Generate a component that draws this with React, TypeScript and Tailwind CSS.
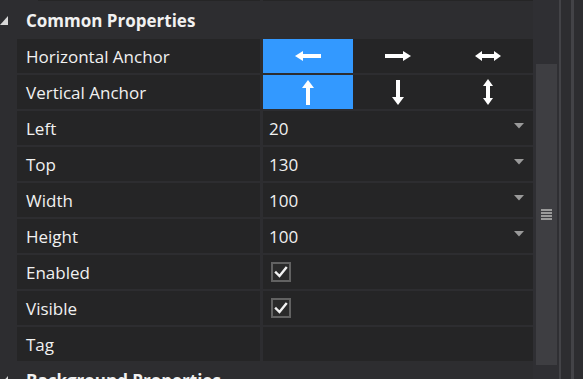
import React from "react";

const FONT = { fontFamily: '"Open Sans", "Noto Sans", sans-serif' };

function Tri() {
  return (
    <svg width="8" height="9" viewBox="0 0 8 9" className="shrink-0">
      <polygon points="8,0 8,9 0,9" fill="#d8d8d8" />
    </svg>
  );
}

function Header({ title }: { title: string }) {
  return (
    <div className="flex h-[34px] shrink-0 items-center">
      <div className="w-[26px] flex items-center">
        <Tri />
      </div>
      <span className="text-[17px] font-bold text-[#f1f1f1] leading-none pt-[1px]">{title}</span>
    </div>
  );
}

function Row({ label, children }: { label: string; children?: React.ReactNode }) {
  return (
    <div className="flex h-[34px] shrink-0 pl-[17px]">
      <div className="w-[243px] bg-[#252526] flex items-center pl-[9px] pt-[2px] text-[17px] text-[#f1f1f1]">
        {label}
      </div>
      <div className="w-[3px]" />
      <div className="w-[270px] bg-[#252526] flex items-center">{children}</div>
    </div>
  );
}

function Dropdown({ value }: { value: string }) {
  return (
    <div className="flex flex-1 items-center justify-between pl-[6px] pr-[9px] text-[17px] text-[#f1f1f1]">
      <span className="pt-[2px]">{value}</span>
      <svg width="10" height="6" viewBox="0 0 10 6" className="mb-[4px]">
        <polygon points="0,0 10,0 5,5.5" fill="#9a9a9a" />
      </svg>
    </div>
  );
}

function Check() {
  return (
    <div className="ml-[8px] w-[20px] h-[20px] border-2 border-[#626262] bg-[#2a2a2a] flex items-center justify-center">
      <svg width="14" height="12" viewBox="0 0 14 12">
        <path d="M2 6.5 L5.5 10 L12 2" stroke="#f2f2f2" strokeWidth="2.4" fill="none" strokeLinecap="square" />
      </svg>
    </div>
  );
}

function Cell({ active, children }: { active?: boolean; children: React.ReactNode }) {
  return (
    <div className={`w-[90px] h-full flex items-center justify-center ${active ? "bg-[#3399ff]" : ""}`}>
      {children}
    </div>
  );
}

const ArrowLeft = () => (
  <svg width="26" height="10" viewBox="0 0 26 10">
    <polygon points="0,5 8,0 8,10" fill="#fff" />
    <rect x="8" y="3" width="18" height="4" fill="#fff" />
  </svg>
);
const ArrowRight = () => (
  <svg width="26" height="10" viewBox="0 0 26 10">
    <polygon points="26,5 18,0 18,10" fill="#fff" />
    <rect x="0" y="3" width="18" height="4" fill="#fff" />
  </svg>
);
const ArrowH = () => (
  <svg width="26" height="10" viewBox="0 0 26 10">
    <polygon points="0,5 7,0 7,10" fill="#fff" />
    <polygon points="26,5 19,0 19,10" fill="#fff" />
    <rect x="7" y="3" width="12" height="4" fill="#fff" />
  </svg>
);
const ArrowUp = () => (
  <svg width="12" height="25" viewBox="0 0 12 25">
    <polygon points="6,0 0,8 12,8" fill="#fff" />
    <rect x="4" y="8" width="4" height="17" fill="#fff" />
  </svg>
);
const ArrowDown = () => (
  <svg width="12" height="25" viewBox="0 0 12 25">
    <polygon points="6,25 0,17 12,17" fill="#fff" />
    <rect x="4" y="0" width="4" height="17" fill="#fff" />
  </svg>
);
const ArrowV = () => (
  <svg width="10" height="26" viewBox="0 0 10 26">
    <polygon points="5,0 0,7 10,7" fill="#fff" />
    <polygon points="5,26 0,19 10,19" fill="#fff" />
    <rect x="3" y="7" width="4" height="12" fill="#fff" />
  </svg>
);

export default function App() {
  return (
    <div className="w-[583px] h-[379px] overflow-hidden bg-[#2d2d30] flex" style={FONT}>
      <div className="w-[533px] flex flex-col gap-[2px]">
        <div className="flex h-[1px] shrink-0 pl-[38px]">
          <div className="w-[222px] bg-[#252526]" />
          <div className="w-[3px]" />
          <div className="w-[270px] bg-[#252526]" />
        </div>
        <Header title="Common Properties" />
        <Row label="Horizontal Anchor">
          <Cell active><ArrowLeft /></Cell>
          <Cell><ArrowRight /></Cell>
          <Cell><ArrowH /></Cell>
        </Row>
        <Row label="Vertical Anchor">
          <Cell active><ArrowUp /></Cell>
          <Cell><ArrowDown /></Cell>
          <Cell><ArrowV /></Cell>
        </Row>
        <Row label="Left"><Dropdown value="20" /></Row>
        <Row label="Top"><Dropdown value="130" /></Row>
        <Row label="Width"><Dropdown value="100" /></Row>
        <Row label="Height"><Dropdown value="100" /></Row>
        <Row label="Enabled"><Check /></Row>
        <Row label="Visible"><Check /></Row>
        <Row label="Tag" />
        <Header title="Background Properties" />
      </div>
      <div className="w-[26px] bg-[#2f2f33] flex flex-col">
        <div className="ml-[3px] mt-[64px] w-[21px] h-[301px] bg-[#3e3e42] flex flex-col items-center justify-center gap-[1px]">
          <div className="w-[11px] h-[2px] bg-[#9a9a9a]" />
          <div className="w-[11px] h-[2px] bg-[#9a9a9a]" />
          <div className="w-[11px] h-[2px] bg-[#9a9a9a]" />
          <div className="w-[11px] h-[2px] bg-[#9a9a9a]" />
        </div>
      </div>
      <div className="w-[2px] bg-[#434347]" />
      <div className="w-[10px] bg-[#2d2d30]" />
      <div className="w-[3px] bg-[#434347]" />
      <div className="flex-1 bg-[#2d2d30]" />
    </div>
  );
}
